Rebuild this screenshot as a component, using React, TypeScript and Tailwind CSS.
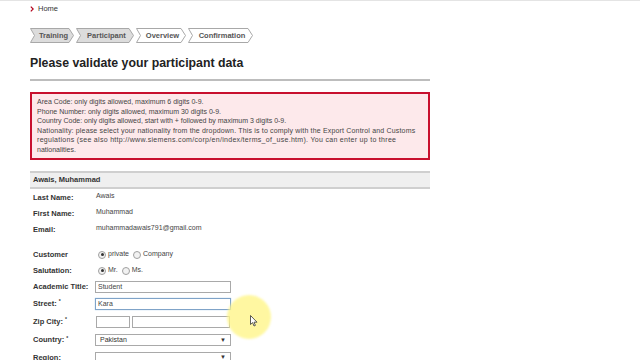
import React from 'react';

const steps = [
  { label: 'Training', width: 44, done: true },
  { label: 'Participant', width: 58, done: true },
  { label: 'Overview', width: 50, done: false },
  { label: 'Confirmation', width: 65, done: false },
];

function Step({ label, width, done }: { label: string; width: number; done: boolean }) {
  const h = 15;
  const p = 5;
  return (
    <div className="relative flex items-center justify-center h-[15px] text-[7.5px] font-bold text-[#555]" style={{ width }}>
      <svg className="absolute inset-0" width={width} height={h}>
        <polygon
          points={`0.5,0.5 ${width - p},0.5 ${width - 0.5},${h / 2} ${width - p},${h - 0.5} 0.5,${h - 0.5} ${p - 0.5},${h / 2}`}
          fill={done ? '#dcdcdc' : '#ffffff'}
          stroke="#a8a8a8"
          strokeWidth="1"
        />
      </svg>
      <span className="relative pl-[3px]">{label}</span>
    </div>
  );
}

function Radio({ checked }: { checked: boolean }) {
  return (
    <span className="inline-flex items-center justify-center w-[8px] h-[8px] rounded-full border border-[#a0a0a0] bg-[#f2f2f2]">
      {checked && <span className="w-[3px] h-[3px] rounded-full bg-[#333]" />}
    </span>
  );
}

function Row({ label, h, children, req }: { label: string; h: string; children?: React.ReactNode; req?: boolean }) {
  return (
    <div className={`flex items-center ${h}`}>
      <div className="w-[66px] pl-[3px] text-[7.5px] font-bold text-[#333]">
        {label}
        {req && <sup className="text-[5px] ml-[2px]">*</sup>}
      </div>
      <div className="flex items-center text-[7px] text-[#444]">{children}</div>
    </div>
  );
}

function Select({ value }: { value: string }) {
  return (
    <div className="flex items-center justify-between w-[136px] h-[12px] border border-[#a9a9a9] bg-white px-[4px] text-[7px] text-[#333]">
      <span>{value}</span>
      <span className="text-[6px]">▼</span>
    </div>
  );
}

export default function App() {
  return (
    <div className="relative w-[640px] h-[360px] overflow-hidden bg-white border-t border-[#e4e4e4] font-['Liberation_Sans',Arial,sans-serif] text-[#333]">
      <div className="pl-[30px] w-[430px]">
        <div className="flex items-center gap-[4px] h-[10px] mt-[3px] text-[7.5px] text-[#333]">
          <svg width="4" height="6" viewBox="0 0 4 6">
            <path d="M0.8 0.6 L3.2 3 L0.8 5.4" fill="none" stroke="#b3001b" strokeWidth="1.2" />
          </svg>
          <span>Home</span>
        </div>

        <div className="flex gap-[2px] mt-[14px]">
          {steps.map((s) => (
            <Step key={s.label} {...s} />
          ))}
        </div>

        <h1 className="mt-[13px] text-[12.3px] font-bold text-[#222] leading-[14px]">
          Please validate your participant data
        </h1>

        <div className="mt-[9px] h-[2px] bg-[#bdbdbd]" />

        <div className="mt-[11px] border-2 border-[#c8102e] bg-[#fde9eb] px-[5px] pt-[3px] pb-[3px] text-[7px] leading-[9.6px] text-[#444]">
          <div>Area Code: only digits allowed, maximum 6 digits 0-9.</div>
          <div>Phone Number: only digits allowed, maximum 30 digits 0-9.</div>
          <div>Country Code: only digits allowed, start with + followed by maximum 3 digits 0-9.</div>
          <div className="whitespace-nowrap">
            <div className="tracking-[0.17px]">
              Nationality: please select your nationality from the dropdown. This is to comply with the Export Control and Customs
            </div>
            <div className="tracking-[0.3px]">
              regulations (see also http://www.siemens.com/corp/en/index/terms_of_use.htm). You can enter up to three
            </div>
            <div>nationalities.</div>
          </div>
        </div>

        <div className="mt-[11px] flex items-center h-[18px] border-t-2 border-b-2 border-[#cfcfcf] bg-[#efefef] pl-[3px] text-[7.5px] font-bold text-[#333]">
          Awais, Muhammad
        </div>

        <div className="mt-[1px]">
          <Row label="Last Name:" h="h-[16px]">
            <span className="-mt-[3px]">Awais</span>
          </Row>
          <Row label="First Name:" h="h-[16px]">
            <span className="-mt-[3px]">Muhammad</span>
          </Row>
          <Row label="Email:" h="h-[16px]">
            <span className="-mt-[3px]">muhammadawais791@gmail.com</span>
          </Row>
          <div className="h-[9px]" />
          <Row label="Customer" h="h-[16px]">
            <span className="flex items-center gap-[2px] ml-[2px]">
              <Radio checked />
              <span className="mr-[2px]">private</span>
              <Radio checked={false} />
              <span>Company</span>
            </span>
          </Row>
          <Row label="Salutation:" h="h-[16px]">
            <span className="flex items-center gap-[2px] ml-[2px]">
              <Radio checked />
              <span className="mr-[2px]">Mr.</span>
              <Radio checked={false} />
              <span>Ms.</span>
            </span>
          </Row>
          <Row label="Academic Title:" h="h-[16px]">
            <div className="-ml-[1px] w-[136px] h-[12px] border border-[#a9a9a9] bg-white px-[2px] leading-[10px]">Student</div>
          </Row>
          <Row label="Street:" h="h-[18px]" req>
            <div className="-ml-[1px] w-[136px] h-[12px] border border-[#7fa3c8] bg-white px-[2px] leading-[10px] shadow-[0_0_1px_#9cc0e6]">Kara</div>
          </Row>
          <Row label="Zip City:" h="h-[18px]" req>
            <div className="flex gap-[2px]">
              <div className="w-[34px] h-[12px] border border-[#a9a9a9] bg-white" />
              <div className="w-[98px] h-[12px] border border-[#a9a9a9] bg-white" />
            </div>
          </Row>
          <Row label="Country:" h="h-[19px]" req>
            <div className="-ml-[1px]">
              <Select value="Pakistan" />
            </div>
          </Row>
          <Row label="Region:" h="h-[16px]">
            <div className="-ml-[1px]">
              <Select value="" />
            </div>
          </Row>
        </div>
      </div>

      <div className="absolute left-[227px] top-[294px] w-[44px] h-[44px] rounded-full bg-[#fff68a] opacity-80 blur-[1px]" />
      <svg className="absolute left-[250px] top-[314px]" width="8" height="12" viewBox="0 0 8 12">
        <path d="M0.5 0.5 L0.5 9.5 L2.6 7.6 L4 11 L5.4 10.4 L4 7.2 L7 7.2 Z" fill="#fff" stroke="#333" strokeWidth="0.8" />
      </svg>
    </div>
  );
}
